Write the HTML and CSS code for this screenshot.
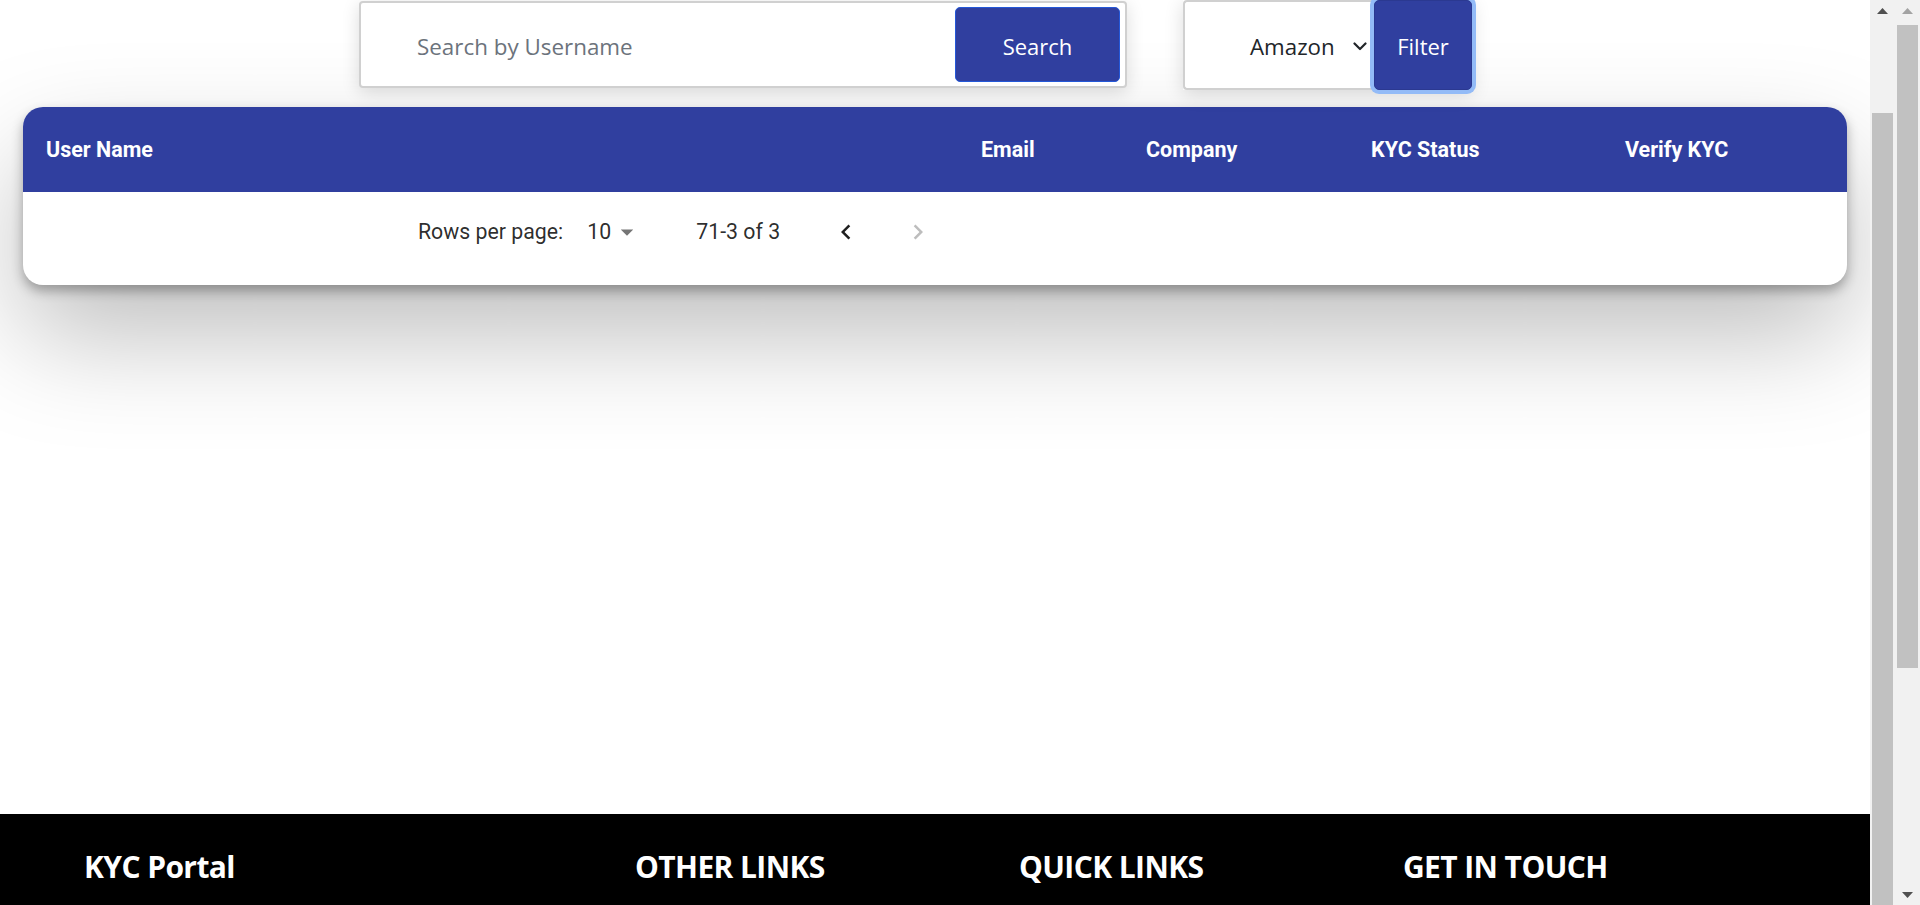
FILE: index.html
```html
<!DOCTYPE html>
<html lang="en">
<head>
<meta charset="utf-8">
<title>KYC Portal</title>
<link rel="stylesheet" href="styles.css">
</head>
<body>
<div class="app">
  <div class="page">
    <main class="main">
      <div class="toolbar">
        <form class="search-form">
          <input class="search-input" type="text" placeholder="Search by Username">
          <button class="btn btn-search" type="button">Search</button>
        </form>
        <form class="filter-form">
          <div class="select">
            <span class="select-value">Amazon</span>
            <svg class="select-chevron" width="14" height="9" viewBox="0 0 14 9"><polyline points="1.5,1.5 7,7 12.5,1.5" fill="none" stroke="#212529" stroke-width="2.2" stroke-linecap="round" stroke-linejoin="round"/></svg>
          </div>
          <button class="btn btn-filter" type="button">Filter</button>
        </form>
      </div>

      <div class="card">
        <table class="kyc-table">
          <colgroup>
            <col class="col-user">
            <col class="col-email">
            <col class="col-company">
            <col class="col-status">
            <col class="col-verify">
          </colgroup>
          <thead>
            <tr>
              <th>User Name</th>
              <th>Email</th>
              <th>Company</th>
              <th>KYC Status</th>
              <th>Verify KYC</th>
            </tr>
          </thead>
          <tfoot>
            <tr>
              <td colspan="5">
                <div class="pagination">
                  <span class="rpp-label">Rows per page:</span>
                  <span class="rpp-select">
                    <span class="rpp-value">10</span>
                    <svg class="icon" width="30" height="30" viewBox="0 0 24 24"><path d="M7 10l5 5 5-5z" fill="#757575"/></svg>
                  </span>
                  <span class="page-range">71-3 of 3</span>
                  <span class="page-btn page-prev"><svg class="icon" width="30" height="30" viewBox="0 0 24 24"><path d="M15.41 16.59 10.83 12l4.58-4.59L14 6l-6 6 6 6 1.41-1.41z" fill="#1f1f1f"/></svg></span>
                  <span class="page-btn page-next"><svg class="icon" width="30" height="30" viewBox="0 0 24 24"><path d="M8.59 16.59 13.17 12 8.59 7.41 10 6l6 6-6 6-1.41-1.41z" fill="#bdbdbd"/></svg></span>
                </div>
              </td>
            </tr>
          </tfoot>
        </table>
      </div>
    </main>

    <footer class="footer">
      <div class="footer-grid">
        <h3 class="footer-title">KYC Portal</h3>
        <h3 class="footer-title">OTHER LINKS</h3>
        <h3 class="footer-title">QUICK LINKS</h3>
        <h3 class="footer-title">GET IN TOUCH</h3>
      </div>
    </footer>
  </div>

  <div class="scrollbar scrollbar-inner">
    <div class="sb-button"><svg width="11" height="6" viewBox="0 0 11 6"><polygon points="5.5,0 11,6 0,6" fill="#505050"/></svg></div>
    <div class="sb-thumb sb-thumb-inner"></div>
  </div>
  <div class="scrollbar scrollbar-outer">
    <div class="sb-button"><svg width="11" height="6" viewBox="0 0 11 6"><polygon points="5.5,0 11,6 0,6" fill="#a3a3a3"/></svg></div>
    <div class="sb-thumb sb-thumb-outer"></div>
    <div class="sb-track-rest"></div>
    <div class="sb-button sb-button-down"><svg width="11" height="6" viewBox="0 0 11 6"><polygon points="0,0 11,0 5.5,6" fill="#505050"/></svg></div>
  </div>
</div>
</body>
</html>
```

FILE: styles.css
```css
* { box-sizing: border-box; }

html, body {
  margin: 0;
  padding: 0;
  height: 100%;
  overflow: hidden;
  background: #fff;
}

.app {
  display: flex;
  height: 905px;
  overflow: hidden;
}

.page {
  width: 1870px;
  flex: 0 0 1870px;
  display: flex;
  flex-direction: column;
  overflow: hidden;
}

.main {
  height: 814px;
  flex: 0 0 814px;
}

/* ---------- toolbar ---------- */
.toolbar {
  display: flex;
  align-items: flex-start;
  padding-left: 359px;
  height: 90px;
}

.search-form {
  display: flex;
  align-items: stretch;
  width: 768px;
  height: 87px;
  margin: 1px 0 0 0;
  padding: 4px 5px 4px 0;
  border: 2px solid #d0d0d0;
  border-radius: 4px;
  background: #fff;
  box-shadow: 0 4px 18px rgba(0, 0, 0, 0.14);
}

.search-input {
  flex: 1;
  min-width: 0;
  border: none;
  outline: none;
  background: transparent;
  padding: 4px 0 0 56px;
  font-family: "Open Sans", "Noto Sans", sans-serif;
  font-size: 22.4px;
  color: #212529;
}

.search-input::placeholder {
  color: #6c737c;
}

.btn {
  font-family: "Open Sans", "Noto Sans", sans-serif;
  font-size: 22px;
  color: #fff;
  background: #303f9f;
  cursor: pointer;
  padding: 2px 0 0;
}

.btn-search {
  width: 165px;
  border: 1px solid #2458d8;
  border-radius: 5px;
}

.filter-form {
  display: flex;
  margin-left: 56px;
  height: 90px;
  box-shadow: 0 4px 18px rgba(0, 0, 0, 0.14);
}

.select {
  width: 191px;
  height: 90px;
  display: flex;
  align-items: center;
  padding: 2px 7px 0 65px;
  border: 2px solid #d0d0d0;
  border-right: none;
  border-radius: 4px 0 0 4px;
  background: #fff;
  font-family: "Open Sans", "Noto Sans", sans-serif;
  font-size: 22.3px;
  color: #212529;
}

.select-chevron {
  margin-left: auto;
  flex: 0 0 auto;
}

.btn-filter {
  width: 98px;
  height: 90px;
  border: 1px solid #2b3991;
  border-radius: 5px;
  box-shadow: 0 0 0 4px #93bbf7;
  position: relative;
}

/* ---------- table card ---------- */
.card {
  margin: 17px 0 0 23px;
  width: 1824px;
  border-radius: 20px;
  background: #fff;
  overflow: hidden;
  box-shadow: 0 6px 12px rgba(0, 0, 0, 0.3), 0 50px 110px rgba(0, 0, 0, 0.26);
}

.kyc-table {
  width: 100%;
  border-collapse: collapse;
  table-layout: fixed;
  font-family: Roboto, "Liberation Sans", sans-serif;
}

.col-user { width: 935px; }
.col-email { width: 165px; }
.col-company { width: 225px; }
.col-status { width: 254px; }
.col-verify { width: auto; }

.kyc-table th {
  height: 85px;
  padding: 0 0 0 23px;
  background: #303f9f;
  color: #fff;
  font-size: 21.5px;
  font-weight: 700;
  text-align: left;
  vertical-align: middle;
}

.kyc-table td {
  padding: 7px 0 21px 0;
}

.pagination {
  display: flex;
  align-items: center;
  height: 65px;
  padding-left: 395px;
  font-size: 21.3px;
  line-height: 28px;
  color: rgba(0, 0, 0, 0.84);
}

.rpp-select {
  display: flex;
  align-items: center;
  margin-left: 24px;
}

.rpp-value {
  margin-right: 1px;
}

.icon {
  display: block;
}

.page-range {
  margin-left: 54px;
}

.page-prev {
  margin-left: 51px;
}

.page-next {
  margin-left: 42px;
}

/* ---------- footer ---------- */
.footer {
  flex: 1 0 auto;
  background: #000;
  color: #fff;
}

.footer-grid {
  display: grid;
  grid-template-columns: 551px 384px 384px 1fr;
  padding: 36px 84px 0;
}

.footer-title {
  margin: 0;
  font-family: "Open Sans", "Noto Sans", sans-serif;
  font-size: 30px;
  line-height: 34px;
  font-weight: 700;
  letter-spacing: -0.6px;
}

/* ---------- scrollbars ---------- */
.scrollbar {
  width: 25px;
  flex: 0 0 25px;
  background: #f1f1f1;
  display: flex;
  flex-direction: column;
  overflow: hidden;
}

.sb-button {
  height: 25px;
  flex: 0 0 25px;
  display: flex;
  align-items: center;
  justify-content: center;
  padding-bottom: 3px;
}

.sb-button-down {
  padding: 4px 0 0;
}

.sb-thumb {
  margin: 0 2px;
  background: #c1c1c1;
}

.sb-thumb-inner {
  margin-top: 88px;
  flex: 1 0 auto;
}

.sb-thumb-outer {
  height: 643px;
  flex: 0 0 643px;
}

.sb-track-rest {
  flex: 1;
}
```
